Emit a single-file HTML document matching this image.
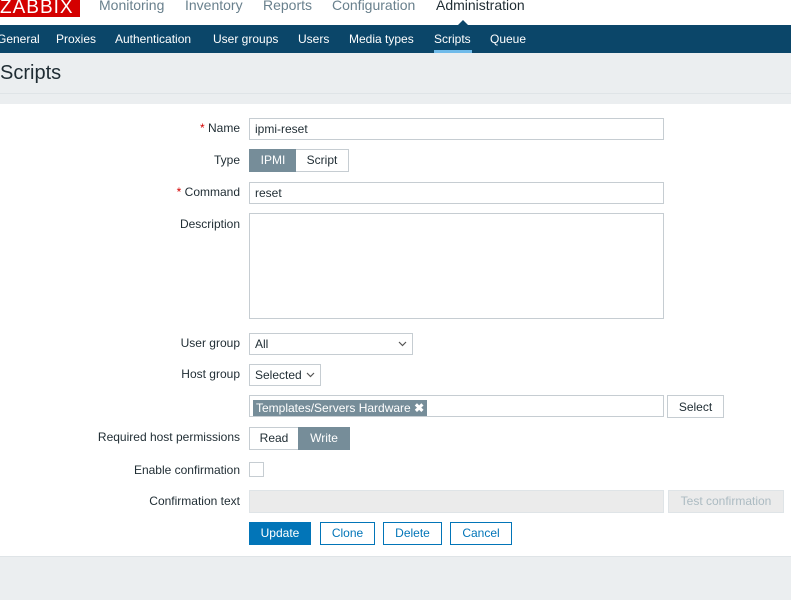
<!DOCTYPE html>
<html><head><meta charset="utf-8"><style>
*{box-sizing:border-box;margin:0;padding:0}
body{width:791px;height:600px;overflow:hidden;background:#ebeef0;font-family:"Liberation Sans",Arial,sans-serif;font-size:12px;color:#1f2c33;position:relative}
.a{position:absolute}
.top{left:0;top:0;width:791px;height:25px;background:#fff}
.logo{left:0;top:0;width:80px;height:17px;background:#d40000;color:#fff;font-size:19px;line-height:15px;letter-spacing:1px;padding-left:0;overflow:hidden;white-space:nowrap}
.mm{top:-3px;font-size:14px;color:#69808d}
.nav{left:0;top:25px;width:791px;height:28px;background:#0b4669}
.nv{top:32px;color:#fff;font-size:12px}
.title{left:0;top:62px;font-size:20px;color:#1f2c33}
.main{left:0;top:104px;width:791px;height:453px;background:#fff;border-bottom:1px solid #dfe4e7}
.lbl{right:551px;text-align:right;width:200px}
.inp{border:1px solid #c6cdd2;background:#fff;padding-left:5px;line-height:20px}
.req{color:#d40000}
.seg{border:1px solid #c6cdd2;background:#fff;text-align:center;line-height:21px}
.on{background:#768d99;color:#fff;border-color:#768d99}
.btn{border:1px solid #0275b8;color:#0275b8;background:#fff;text-align:center;line-height:20px}
.chev{position:absolute;top:7px}
</style></head><body>
<div class="a top"></div>
<div class="a logo">ZABBIX</div>
<div class="a mm" style="left:99px">Monitoring</div>
<div class="a mm" style="left:185px">Inventory</div>
<div class="a mm" style="left:263px">Reports</div>
<div class="a mm" style="left:332px">Configuration</div>
<div class="a mm" style="left:436px;color:#1f2c33">Administration</div>
<div class="a nav"></div>
<div class="a" style="left:457px;top:20px;width:0;height:0;border-left:6px solid transparent;border-right:6px solid transparent;border-bottom:6px solid #0b4669"></div>
<div class="a nv" style="left:-3px">General</div>
<div class="a nv" style="left:56px">Proxies</div>
<div class="a nv" style="left:115px">Authentication</div>
<div class="a nv" style="left:213px">User groups</div>
<div class="a nv" style="left:298px">Users</div>
<div class="a nv" style="left:349px">Media types</div>
<div class="a nv" style="left:434px">Scripts</div>
<div class="a" style="left:434px;top:50px;width:38px;height:3px;background:#70bbea"></div>
<div class="a nv" style="left:490px">Queue</div>
<div class="a title">Scripts</div>
<div class="a" style="left:0;top:93px;width:791px;height:1px;background:#dfe4e7"></div>
<div class="a main"></div>

<div class="a lbl" style="top:121px"><span class="req">*</span> Name</div>
<div class="a inp" style="left:249px;top:118px;width:415px;height:22px">ipmi-reset</div>
<div class="a lbl" style="top:153px">Type</div>
<div class="a seg on" style="left:249px;top:149px;width:48px;height:23px">IPMI</div>
<div class="a seg" style="left:296px;top:149px;width:53px;height:23px;border-left:none">Script</div>
<div class="a lbl" style="top:185px"><span class="req">*</span> Command</div>
<div class="a inp" style="left:249px;top:182px;width:415px;height:22px">reset</div>
<div class="a lbl" style="top:217px">Description</div>
<div class="a inp" style="left:249px;top:213px;width:415px;height:106px"></div>
<div class="a lbl" style="top:336px">User group</div>
<div class="a inp" style="left:249px;top:333px;width:164px;height:22px">All<svg class="chev" style="right:5px" width="9" height="6" viewBox="0 0 9 6"><path d="M1 1l3.5 3.5L8 1" fill="none" stroke="#555" stroke-width="1.2"/></svg></div>
<div class="a lbl" style="top:367px">Host group</div>
<div class="a inp" style="left:249px;top:364px;width:72px;height:22px">Selected<svg class="chev" style="right:5px" width="9" height="6" viewBox="0 0 9 6"><path d="M1 1l3.5 3.5L8 1" fill="none" stroke="#555" stroke-width="1.2"/></svg></div>
<div class="a inp" style="left:249px;top:395px;width:415px;height:22px;padding:2px 3px"><span style="display:inline-block;background:#768d99;color:#fff;line-height:16px;padding:0 3px">Templates/Servers Hardware <b>&#10006;</b></span></div>
<div class="a seg" style="left:667px;top:395px;width:57px;height:23px;line-height:22px">Select</div>
<div class="a lbl" style="top:430px">Required host permissions</div>
<div class="a seg" style="left:249px;top:427px;width:50px;height:23px">Read</div>
<div class="a seg on" style="left:298px;top:427px;width:52px;height:23px">Write</div>
<div class="a lbl" style="top:463px">Enable confirmation</div>
<div class="a" style="left:249px;top:462px;width:15px;height:15px;border:1px solid #c6cdd2;background:#fff"></div>
<div class="a lbl" style="top:494px">Confirmation text</div>
<div class="a" style="left:249px;top:490px;width:415px;height:23px;background:#ebebeb;border:1px solid #dfe4e7"></div>
<div class="a seg" style="left:668px;top:490px;width:116px;height:23px;background:#ebebeb;color:#acbbc2;border-color:#dfe4e7">Test confirmation</div>
<div class="a btn" style="left:249px;top:522px;width:62px;height:23px;background:#0275b8;color:#fff">Update</div>
<div class="a btn" style="left:320px;top:522px;width:55px;height:23px">Clone</div>
<div class="a btn" style="left:383px;top:522px;width:59px;height:23px">Delete</div>
<div class="a btn" style="left:450px;top:522px;width:62px;height:23px">Cancel</div>
</body></html>
